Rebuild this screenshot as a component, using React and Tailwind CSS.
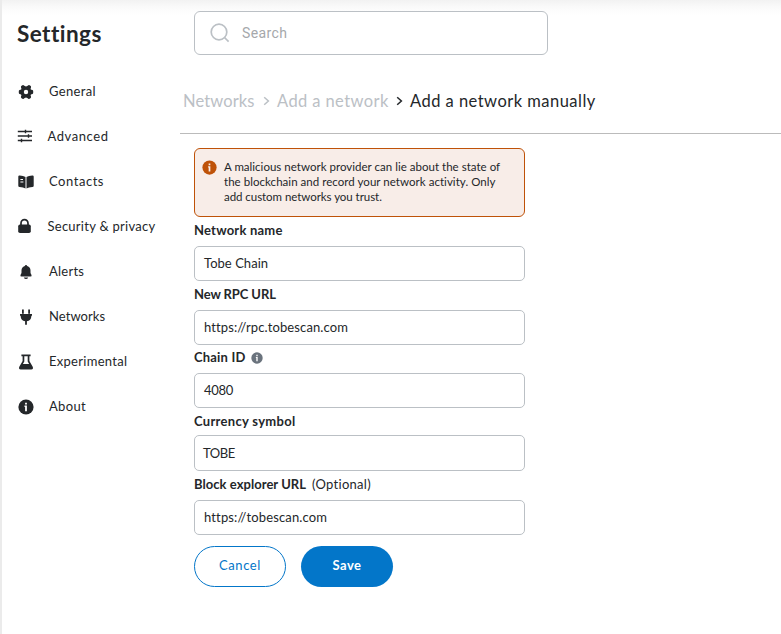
import React from "react";

const icons = {
  general: (
    <svg viewBox="0 0 16 16" className="size-4" fill="currentColor">
      <path
        fillRule="evenodd"
        d="M4 1.4Q4.8 .7 5.7 1.2L6.7 2.1Q8 2.9 9.3 2.1L10.3 1.2Q11.2 .7 12 1.4L12.7 2Q13.2 2.5 13 3.4L12.6 4.4Q12.5 5.5 13.5 5.8L14.5 6.1Q15.2 6.4 15.2 7.2V8.8Q15.2 9.6 14.5 9.9L13.5 10.2Q12.5 10.5 12.6 11.6L13 12.6Q13.2 13.5 12.7 14L12 14.6Q11.2 15.3 10.3 14.8L9.3 13.9Q8 13.1 6.7 13.9L5.7 14.8Q4.8 15.3 4 14.6L3.3 14Q2.8 13.5 3 12.6L3.4 11.6Q3.5 10.5 2.5 10.2L1.5 9.9Q.8 9.6 .8 8.8V7.2Q.8 6.4 1.5 6.1L2.5 5.8Q3.5 5.5 3.4 4.4L3 3.4Q2.8 2.5 3.3 2ZM8 5.8A2.2 2.2 0 1 0 8 10.2A2.2 2.2 0 0 0 8 5.8Z"
      />
    </svg>
  ),
  advanced: (
    <svg viewBox="0 0 16 16" className="-mt-px size-4" stroke="currentColor" fill="none">
      <path strokeWidth="1.3" d="M.8 3.5H15M.8 8H15M.8 12.5H15" />
      <path strokeWidth="1.4" d="M8.5 1.8V5.2M11.5 6.3V9.7M4.5 10.8V14.2" />
    </svg>
  ),
  contacts: (
    <svg viewBox="0 0 16 16" className="size-4" fill="currentColor">
      <path
        fillRule="evenodd"
        d="M7.5 3.1V14.6C6 13.7 4.2 13.2 1.6 13Q.3 12.9 .3 11.7V2.6Q.3 1.3 1.6 1.4C4.2 1.6 6 2.1 7.5 3.1ZM2.4 5V5.9H5V5ZM2.4 7.5V8.4H5.4V7.5Z"
      />
      <path d="M8.5 3.1V14.6C10 13.7 11.8 13.2 14.4 13Q15.7 12.9 15.7 11.7V2.6Q15.7 1.3 14.4 1.4C11.8 1.6 10 2.1 8.5 3.1Z" />
    </svg>
  ),
  security: (
    <svg viewBox="0 0 16 16" className="-mt-px size-4" fill="currentColor">
      <rect x="1.2" y="6.4" width="12.6" height="8.6" rx="1.8" />
      <path d="M4 7V5.2a3.5 3.5 0 0 1 7 0V7" fill="none" stroke="currentColor" strokeWidth="1.7" />
    </svg>
  ),
  alerts: (
    <svg viewBox="0 0 16 16" className="size-4" fill="currentColor">
      <path d="M8 .9Q9 .9 9.2 2C11.5 2.6 12.5 4.3 12.5 6.5V8.5Q12.5 9.3 13 10.1L13.5 11Q14 12.5 12.5 12.6H3.5Q2 12.5 2.5 11L3 10.1Q3.5 9.3 3.5 8.5V6.5C3.5 4.3 4.5 2.6 6.8 2Q7 .9 8 .9Z" />
      <path d="M5.8 13.4H10.2Q9.6 15.1 8 15.1T5.8 13.4Z" />
    </svg>
  ),
  networks: (
    <svg viewBox="0 0 16 16" className="size-4" fill="currentColor">
      <path d="M4 .4H5.8V4.8H4ZM10.2 .4H12V4.8H10.2Z" />
      <path d="M2 5H14V6.8H13.3V7.5C13.3 10 11.5 11.9 8.9 12.3V15.7H7.1V12.3C4.5 11.9 2.7 10 2.7 7.5V6.8H2Z" />
    </svg>
  ),
  experimental: (
    <svg viewBox="0 0 16 16" className="size-4" fill="currentColor">
      <path
        fillRule="evenodd"
        d="M3.4 .6H12.6V2.2H11.4V7L14.7 12.8Q15.7 15.2 13.3 15.5H2.7Q.3 15.2 1.3 12.8L4.6 7V2.2H3.4ZM6.3 2.2V7.4L4.9 10H11.1L9.7 7.4V2.2Z"
      />
    </svg>
  ),
};

function Info({ className, mark = "#fff" }) {
  return (
    <svg viewBox="0 0 16 16" className={className}>
      <circle cx="8" cy="8" r="7.6" fill="currentColor" />
      <path fill={mark} d="M7.1 3.7H8.9V5.5H7.1ZM6.5 6.6H8.9V12.2H7.1V7.9H6.5Z" />
    </svg>
  );
}

const nav = [
  { id: "general", label: "General", cls: "tracking-[0.35px]" },
  { id: "advanced", label: "Advanced", cls: "-ml-[1.5px] tracking-[0.57px]" },
  { id: "contacts", label: "Contacts", cls: "tracking-[0.54px]" },
  { id: "security", label: "Security & privacy", cls: "-ml-[1.5px] tracking-[0.26px]" },
  { id: "alerts", label: "Alerts", cls: "tracking-[0.25px]" },
  { id: "networks", label: "Networks", cls: "tracking-[0.06px]" },
  { id: "experimental", label: "Experimental", cls: "tracking-[0.28px]" },
  { id: "about", label: "About", cls: "tracking-[0.33px]" },
];

const fields = [
  {
    label: "Network name", value: "Tobe Chain",
    row: "h-[29px] pb-[2px]", labelCls: "tracking-[0.21px]",
    box: "h-[35px] pl-[9px] tracking-[0.04px]",
  },
  {
    label: "New RPC URL", value: "https://rpc.tobescan.com",
    row: "h-[29px] pb-[2px]", labelCls: "tracking-[-0.1px]",
    box: "h-[35px] pl-[9px] tracking-[0.11px]",
  },
  {
    label: "Chain ID", value: "4080", info: true,
    row: "h-[28px] pb-[3px]", labelCls: "tracking-[0.18px]",
    box: "h-[35px] pl-[9px] tracking-[-0.3px]",
  },
  {
    label: "Currency symbol", value: "TOBE",
    row: "h-[27px]", labelCls: "tracking-[0.3px]",
    box: "h-[36px] pl-[8px] pt-px tracking-[-0.4px]",
  },
  {
    label: "Block explorer URL", value: "https://tobescan.com", optional: true,
    row: "h-[29px] pb-[1px]", labelCls: "tracking-[0.04px]",
    box: "h-[35px] pl-[9px] tracking-[0.14px]",
  },
];

function Chevron({ className = "" }) {
  return (
    <svg viewBox="0 0 7 10" className={`h-[10px] w-[7px] ${className}`} fill="none" stroke="currentColor" strokeWidth="1.5">
      <path d="M1.2 1.2L5.4 5L1.2 8.8" />
    </svg>
  );
}

export default function App() {
  return (
    <div className="flex h-[634px] w-[781px] overflow-hidden border-l-2 border-[#ebebeb] bg-[linear-gradient(to_bottom,#f2f2f2_0px,#fafafa_7px,#ffffff_15px)] font-['Lato','Liberation_Sans',sans-serif] text-[#24272a]">
      <aside className="w-[178px] shrink-0 pl-[15px] pt-[19px]">
        <h1 className="h-[30px] whitespace-nowrap text-[22.5px] font-bold leading-[30px] tracking-[0.45px]">Settings</h1>
        <nav className="mt-[20px] pl-px">
          {nav.map((n) => (
            <a key={n.id} className={`flex h-[45px] items-center gap-[15px] whitespace-nowrap text-[13px] ${n.cls}`}>
              {n.id === "about" ? <Info className="size-4" /> : icons[n.id]}
              <span>{n.label}</span>
            </a>
          ))}
        </nav>
      </aside>

      <main className="min-w-0 flex-1">
        <div className="ml-[14px] mt-[11px] flex h-[44px] w-[354px] items-center rounded-[6px] border border-[#bbc0c5] bg-white pl-[15px]">
          <svg viewBox="0 0 20 20" className="size-5" fill="none" stroke="#bbc0c5" strokeWidth="1.7">
            <circle cx="9" cy="9" r="7.8" />
            <path d="M14.5 14.5L18.6 18.6" />
          </svg>
          <span className="ml-3 font-[Roboto] text-[14px] tracking-[0.4px] text-[#a5a8ab]">Search</span>
        </div>

        <div className="flex h-[79px] items-center whitespace-nowrap border-b border-[#bbbbbb] pl-[3px] pt-[14px] text-[16.5px] text-[#bbc0c5]">
          <span className="w-[80px] tracking-[0.12px]">Networks</span>
          <Chevron />
          <span className="ml-[7px] w-[119px] tracking-[0.4px]">Add a network</span>
          <Chevron className="text-[#24272a]" />
          <span className="ml-[7px] tracking-[0.47px] text-[#24272a]">Add a network manually</span>
        </div>

        <form className="ml-[14px] mt-[14px] w-[331px]">
          <div className="flex h-[69px] rounded-[6px] border border-[#bf5208] bg-[#f8ede8] pl-[7px] pt-[10px]">
            <Info className="mt-px size-[15px] text-[#bf5208]" mark="#f8ede8" />
            <p className="ml-[7px] whitespace-nowrap text-[11.5px] leading-[15px]">
              <span className="block tracking-[0.02px]">A malicious network provider can lie about the state of</span>
              <span className="block tracking-[0.04px]">the blockchain and record your network activity. Only</span>
              <span className="block tracking-[-0.05px]">add custom networks you trust.</span>
            </p>
          </div>

          {fields.map((f) => (
            <div key={f.label}>
              <div className={`flex items-center whitespace-nowrap text-[13px] ${f.row}`}>
                <span className={`font-bold ${f.labelCls}`}>{f.label}</span>
                {f.info && <Info className="ml-[5px] size-[12px] text-[#6a737d]" />}
                {f.optional && <span className="ml-[6px] tracking-[0.28px]">(Optional)</span>}
              </div>
              <div className={`flex items-center rounded-[5px] border border-[#bbc0c5] bg-white text-[13px] ${f.box}`}>{f.value}</div>
            </div>
          ))}

          <div className="mt-[11px] flex gap-[15px] text-[13px]">
            <button type="button" className="h-[41px] w-[92px] rounded-full border border-[#0376c9] pb-[2px] tracking-[0.6px] text-[#0376c9]">Cancel</button>
            <button type="button" className="h-[41px] w-[92px] rounded-full bg-[#0376c9] pb-[2px] font-bold tracking-[0.48px] text-white">Save</button>
          </div>
        </form>
      </main>
    </div>
  );
}
